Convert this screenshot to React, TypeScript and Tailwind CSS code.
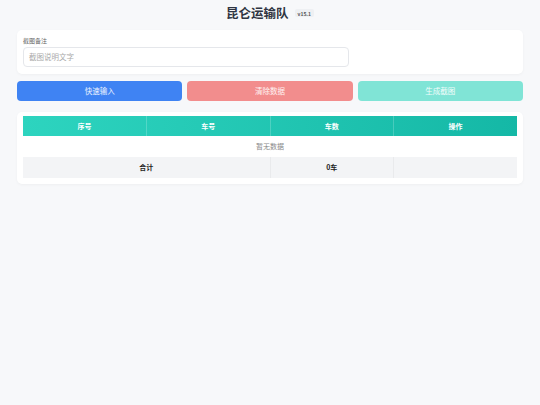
import React from 'react';

const font = { fontFamily: '"Noto Sans CJK SC", "Noto Sans", sans-serif' };

export default function App() {
  return (
    <div className="min-h-[405px] w-[540px] bg-[#f7f8fa] px-[17px] pt-[5px]" style={font}>
      <div className="flex items-center justify-center gap-[6px] h-[16px]">
        <h1 className="text-[12.5px] font-bold leading-none text-[#2f3542]">昆仑运输队</h1>
        <span className="rounded-[2px] bg-[#eef0f3] px-[3px] py-[1.5px] text-[5px] font-semibold leading-none text-[#555]">v15.1</span>
      </div>

      <div className="mt-[9px] rounded-[5px] bg-white px-[6px] pt-[7px] pb-[7px] shadow-[0_1px_3px_rgba(0,0,0,0.04)]">
        <div className="text-[6px] leading-[8px] text-[#666]">截图备注</div>
        <div className="mt-[2px] flex h-[20px] w-[326px] items-center rounded-[4px] border border-[#e5e7eb] px-[5px] text-[7.5px] text-[#aaa]">
          截图说明文字
        </div>
      </div>

      <div className="mt-[7px] grid grid-cols-3 gap-[5px]">
        <button className="h-[20px] rounded-[4px] bg-[#3f83f3] text-[7.5px] text-white/90">快速输入</button>
        <button className="h-[20px] rounded-[4px] bg-[#f28d8d] text-[7.5px] text-white/90">清除数据</button>
        <button className="h-[20px] rounded-[4px] bg-[#80e4d6] text-[7.5px] text-white/90">生成截图</button>
      </div>

      <div className="mt-[11px] rounded-[5px] bg-white p-[6px] pt-[4px] shadow-[0_1px_3px_rgba(0,0,0,0.04)]">
        <table className="w-full table-fixed border-collapse text-[7px]">
          <thead>
            <tr className="h-[20px] bg-gradient-to-r from-[#2dd4bf] to-[#14b8a6] text-white font-bold">
              <th className="border-r border-white/20">序号</th>
              <th className="border-r border-white/20">车号</th>
              <th className="border-r border-white/20">车数</th>
              <th>操作</th>
            </tr>
          </thead>
          <tbody>
            <tr className="h-[21px]">
              <td colSpan={4} className="text-center text-[#888]">暂无数据</td>
            </tr>
            <tr className="h-[21px] bg-[#f3f4f6] font-bold text-[#222]">
              <td colSpan={2} className="border-r border-[#e9eaec] text-center">合计</td>
              <td className="border-r border-[#e9eaec] text-center">0车</td>
              <td></td>
            </tr>
          </tbody>
        </table>
      </div>
    </div>
  );
}
